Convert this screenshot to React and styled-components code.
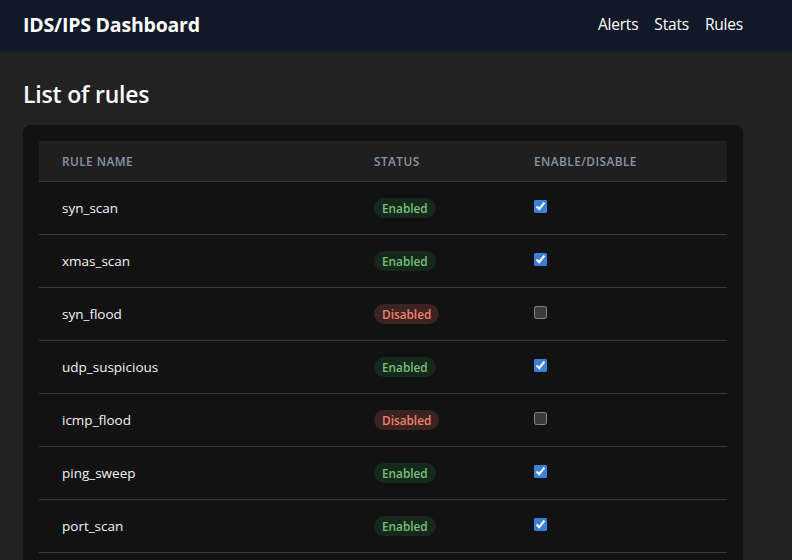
import React, { useState } from "react";
import styled, { createGlobalStyle } from "styled-components";

const Global = createGlobalStyle`
  html, body { margin: 0; padding: 0; background: #222222; color-scheme: dark; }
  body { font-family: "Open Sans", "Noto Sans", sans-serif; color: #f3f4f6; }
  * { box-sizing: border-box; }
`;

const Header = styled.header`
  height: 52px;
  background: #111827;
  display: flex;
  align-items: center;
  padding-bottom: 4px;
`;

const HeaderInner = styled.div`
  width: 720px;
  margin-left: 23px;
  display: flex;
  align-items: center;
  justify-content: space-between;
`;

const Brand = styled.h1`
  margin: 0;
  font-size: 19.5px;
  font-weight: 700;
  color: #ffffff;
  letter-spacing: -0.2px;
`;

const Nav = styled.nav`
  display: flex;
  gap: 16px;
`;

const NavLink = styled.a`
  color: #ffffff;
  font-size: 15.5px;
  text-decoration: none;
  letter-spacing: -0.2px;
`;

const Main = styled.main`
  width: 720px;
  margin-left: 23px;
  padding-top: 26px;
`;

const Title = styled.h2`
  margin: 0 0 15px;
  font-size: 23px;
  font-weight: 600;
  line-height: 32px;
  color: #ffffff;
  letter-spacing: -0.2px;
`;

const Card = styled.section`
  background: #121212;
  border-radius: 8px;
  padding: 16px;
`;

const Table = styled.table`
  width: 100%;
  border-collapse: collapse;
  table-layout: fixed;
`;

const HeadRow = styled.tr`
  background: #1f1f1f;
  border-bottom: 1px solid #3a3a3a;
`;

const Th = styled.th`
  text-align: left;
  padding: 12px 23px 11px;
  height: 40px;
  font-size: 11.8px;
  line-height: 16px;
  font-weight: 600;
  letter-spacing: 0.04em;
  text-transform: uppercase;
  color: #8c95a8;
  width: ${(p) => p.$w}px;
`;

const Row = styled.tr`
  border-bottom: 1px solid #3a3a3a;
`;

const Td = styled.td`
  padding: 0 23px;
  height: 53px;
  font-size: 13.5px;
  line-height: 20px;
  color: #f3f4f6;
  vertical-align: middle;
`;

const Badge = styled.span`
  display: inline-block;
  padding: 1px 8px;
  border-radius: 9999px;
  font-size: 11.8px;
  line-height: 18px;
  font-weight: 600;
  color: ${(p) => (p.$on ? "#74c278" : "#f0826f")};
  background: ${(p) => (p.$on ? "#16281b" : "#3b2322")};
`;

const Check = styled.input`
  margin: 0;
  width: 13px;
  height: 13px;
  accent-color: #3b7fd9;
  display: block;
  position: relative;
  top: -1px;
`;

const initial = [
  ["syn_scan", true],
  ["xmas_scan", true],
  ["syn_flood", false],
  ["udp_suspicious", true],
  ["icmp_flood", false],
  ["ping_sweep", true],
  ["port_scan", true],
];

export default function App() {
  const [rules, setRules] = useState(initial);
  const toggle = (i) =>
    setRules((r) => r.map((x, j) => (j === i ? [x[0], !x[1]] : x)));
  return (
    <>
      <Global />
      <Header>
        <HeaderInner>
          <Brand>IDS/IPS Dashboard</Brand>
          <Nav>
            <NavLink href="#">Alerts</NavLink>
            <NavLink href="#">Stats</NavLink>
            <NavLink href="#">Rules</NavLink>
          </Nav>
        </HeaderInner>
      </Header>
      <Main>
        <Title>List of rules</Title>
        <Card>
          <Table>
            <thead>
              <HeadRow>
                <Th $w={312}>Rule Name</Th>
                <Th $w={160}>Status</Th>
                <Th $w={216}>Enable/Disable</Th>
              </HeadRow>
            </thead>
            <tbody>
              {rules.map(([name, on], i) => (
                <Row key={name}>
                  <Td>{name}</Td>
                  <Td>
                    <Badge $on={on}>{on ? "Enabled" : "Disabled"}</Badge>
                  </Td>
                  <Td>
                    <Check type="checkbox" checked={on} onChange={() => toggle(i)} />
                  </Td>
                </Row>
              ))}
            </tbody>
          </Table>
        </Card>
      </Main>
    </>
  );
}
